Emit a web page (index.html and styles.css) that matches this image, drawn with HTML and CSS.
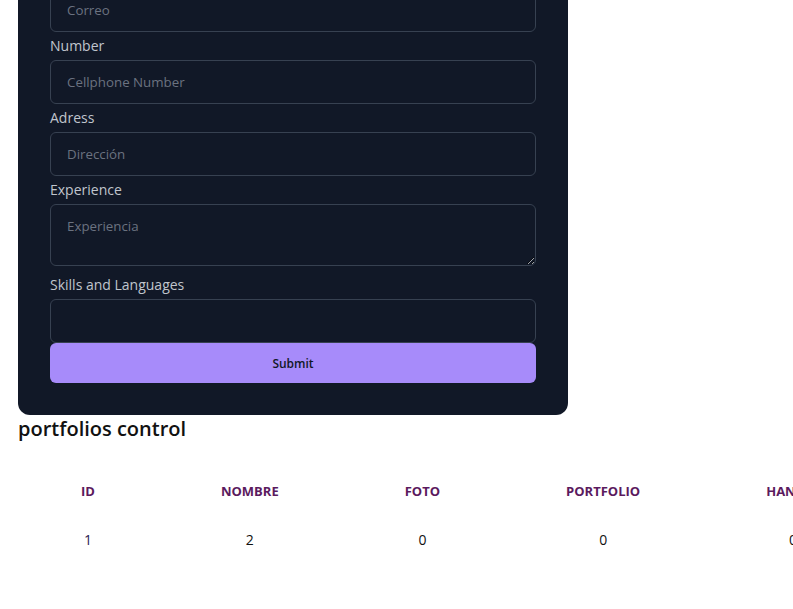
FILE: index.html
```html
<!DOCTYPE html>
<html lang="en">
<head>
<meta charset="utf-8">
<title>Portfolios</title>
<link rel="stylesheet" href="styles.css">
</head>
<body>
<main class="page">
  <form class="card">
    <input class="field" type="email" placeholder="Correo">
    <label class="label">Number</label>
    <input class="field" type="text" placeholder="Cellphone Number">
    <label class="label">Adress</label>
    <input class="field" type="text" placeholder="Dirección">
    <label class="label">Experience</label>
    <textarea class="field area" placeholder="Experiencia"></textarea>
    <label class="label">Skills and Languages</label>
    <input class="field" type="text">
    <button class="submit" type="button">Submit</button>
  </form>
  <h2 class="title">portfolios control</h2>
  <div class="table-wrap">
    <table class="table">
      <thead>
        <tr><th>ID</th><th>Nombre</th><th>Foto</th><th>Portfolio</th><th>Handle</th><th>Extra</th></tr>
      </thead>
      <tbody>
        <tr><td class="id">1</td><td>2</td><td>0</td><td>0</td><td>0</td><td>0</td></tr>
      </tbody>
    </table>
  </div>
</main>
</body>
</html>
```
FILE: styles.css
```css
* { box-sizing: border-box; }
html, body { margin: 0; padding: 0; background: #ffffff; overflow: hidden; }
body { font-family: "Open Sans", "Liberation Sans", sans-serif; color: #111111; }
.page { padding: 0 0 0 18px; width: 793px; }
.card {
  width: 550px;
  margin-top: -12px;
  padding: 0 32px 32px;
  background: #111827;
  border-radius: 0 0 12px 12px;
  display: flex;
  flex-direction: column;
}
.label {
  display: block;
  color: #c0c5cd;
  font-size: 14px;
  line-height: 20px;
  margin: 4px 0 4px;
}
.field {
  display: block;
  width: 100%;
  height: 44px;
  background: #111827;
  border: 1px solid #374151;
  border-radius: 6px;
  padding: 0 16px;
  font-family: inherit;
  font-size: 13.33px;
  color: #e5e7eb;
  outline: none;
}
.field::placeholder { color: #6b7280; }
.area {
  height: 62px;
  padding: 12px 16px;
  margin-bottom: 5px;
  resize: vertical;
}
.submit {
  height: 40px;
  border: none;
  border-radius: 6px;
  background: #a78bfa;
  color: #111827;
  font-family: inherit;
  font-size: 12px;
  font-weight: 600;
}
.title {
  margin: 0;
  font-size: 20px;
  line-height: 28px;
  font-weight: 600;
  color: #111111;
}
.table-wrap { overflow: hidden; margin-top: 24px; }
.table { border-collapse: collapse; white-space: nowrap; }
.table th {
  padding: 15px 63px 14px;
  font-size: 13px;
  line-height: 19px;
  font-weight: 700;
  text-transform: uppercase;
  color: #5b1a5e;
  text-align: center;
}
.table td {
  padding: 15px 63px;
  font-size: 14px;
  line-height: 19px;
  text-align: center;
  color: #111111;
}
.table td.id { color: #2a2350; }
```
